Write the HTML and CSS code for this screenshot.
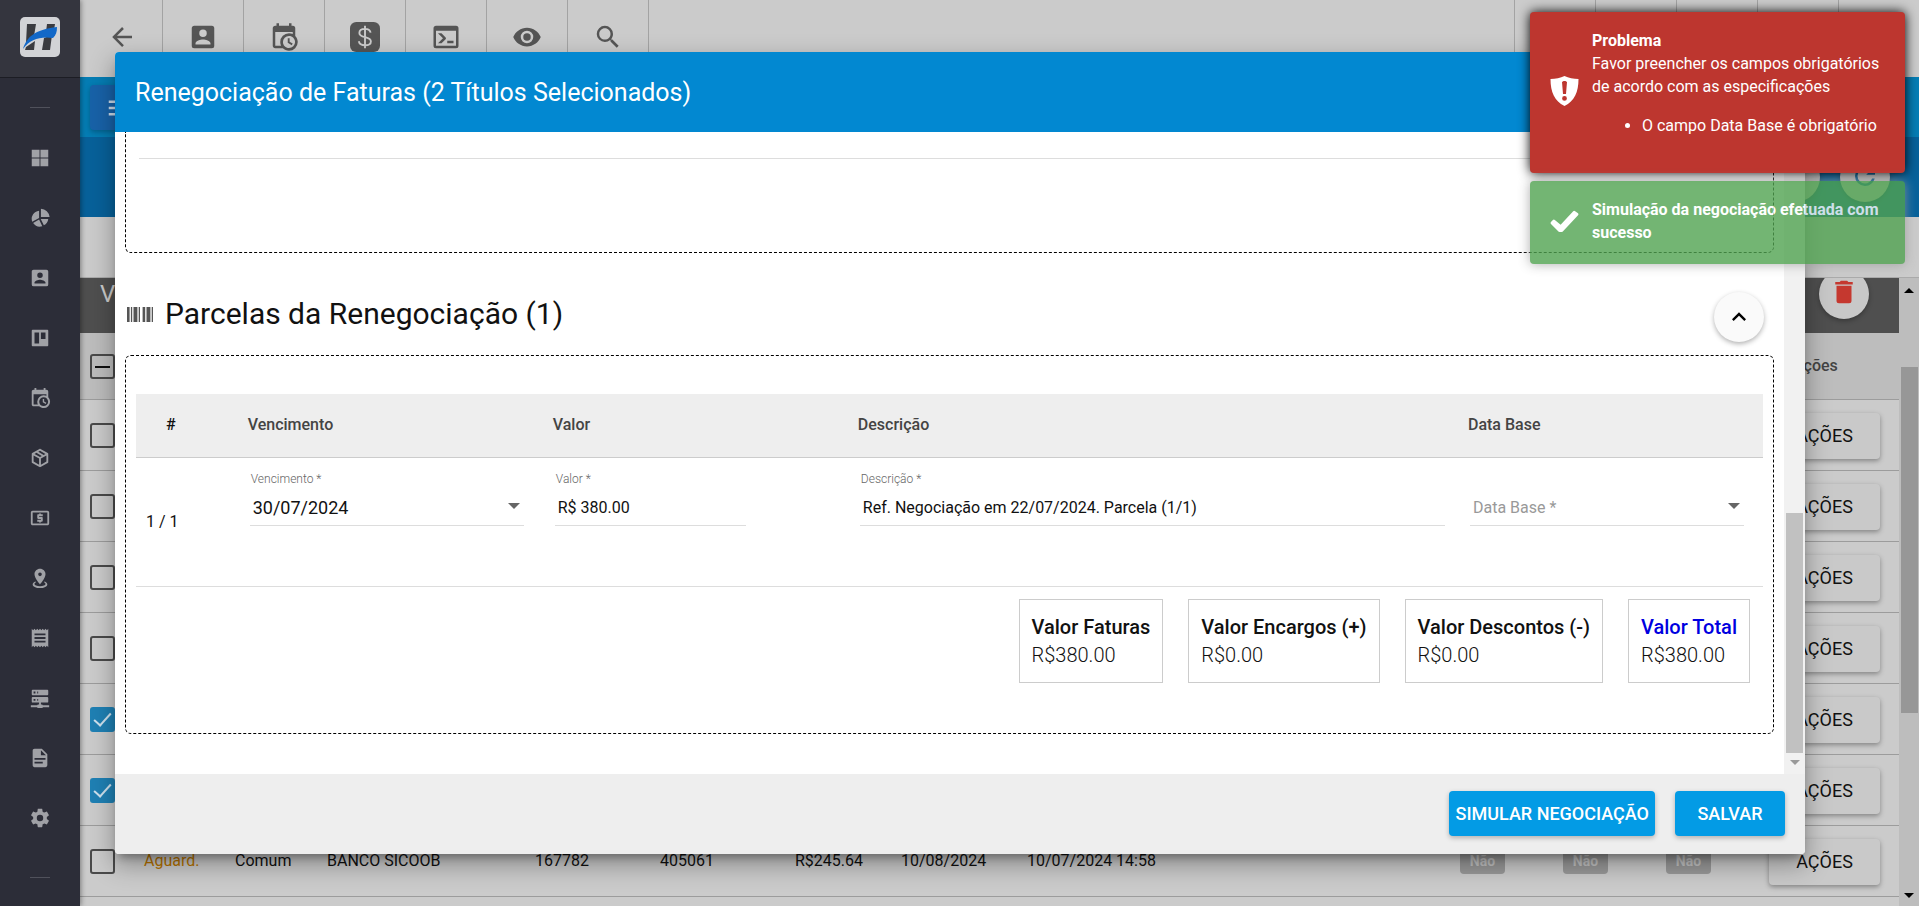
FILE: index.html
```html
<!DOCTYPE html>
<html lang="pt-BR">
<head>
  <meta charset="UTF-8">
  <meta name="viewport" content="width=device-width, initial-scale=1.0">
  <title>Renegociação de Faturas</title>
  <link rel="stylesheet" href="styles.css">
</head>
<body>
  <!-- Menu lateral -->
  <nav class="sidebar">
    <a class="logo" href="#" aria-label="Início">
      <svg width="40" height="40" viewBox="0 0 40 40">
        <rect width="40" height="40" rx="5" fill="#d2d3d6"/>
        <path d="M7 7h9l-2 12-8 7zM27 7h8l-1 6-8 2zM6 30l9-6-1 9H5zM24 21l8-3-2 15h-8z" fill="#3a3b40"/>
        <path d="M3 32C7 20 14 13 37 10c0 5-1 8-4 11C21 19 10 22 3 32z" fill="#1268c8"/>
      </svg>
    </a>
    <hr>
    <ul>
      <li><a href="#" aria-label="Painel"><svg viewBox="0 0 24 24"><path d="M3 3h8.500v8.500H3zM12.500 3H21v8.500h-8.500zM3 12.500h8.500V21H3zM12.500 12.500H21V21h-8.500z"/></svg></a></li>
      <li><a href="#" aria-label="Gráficos"><svg viewBox="0 0 24 24"><path d="M13 2a10 10 0 0 1 9.500 9H13zM11 4v8l-7.500 4A9 9 0 0 1 11 4zM4.500 17.500l6.500-3.800 3.500 7.300A9 9 0 0 1 4.500 17.500zM12.800 13H21a9 9 0 0 1-4.800 7z"/></svg></a></li>
      <li><a href="#" aria-label="Clientes"><svg viewBox="0 0 24 24"><path d="M6,17C6,15 10,13.9 12,13.9C14,13.9 18,15 18,17V18H6M15,9A3,3 0 0,1 12,12A3,3 0 0,1 9,9A3,3 0 0,1 12,6A3,3 0 0,1 15,9M3,5V19A2,2 0 0,0 5,21H19A2,2 0 0,0 21,19V5A2,2 0 0,0 19,3H5C3.89,3 3,3.9 3,5Z"/></svg></a></li>
      <li><a href="#" aria-label="Quadros"><svg viewBox="0 0 24 24"><path fill-rule="evenodd" d="M4 3h16a1 1 0 0 1 1 1v16a1 1 0 0 1-1 1H4a1 1 0 0 1-1-1V4a1 1 0 0 1 1-1zM6 6v12h5V6zM13 6v7h5V6z"/></svg></a></li>
      <li><a href="#" aria-label="Agenda"><svg viewBox="0 0 24 24"><path d="M15,13H16.5V15.82L18.94,17.23L18.19,18.53L15,16.69V13M19,8H5V19H9.67C9.24,18.09 9,17.07 9,16A7,7 0 0,1 16,9C17.07,9 18.09,9.24 19,9.67V8M5,21C3.89,21 3,20.1 3,19V5C3,3.89 3.89,3 5,3H6V1H8V3H16V1H18V3H19A2,2 0 0,1 21,5V11.1C22.24,12.36 23,14.09 23,16A7,7 0 0,1 16,23C14.09,23 12.36,22.24 11.1,21H5M16,11.15A4.85,4.85 0 0,0 11.15,16C11.15,18.68 13.32,20.85 16,20.85A4.85,4.85 0 0,0 20.85,16C20.85,13.32 18.68,11.15 16,11.15Z"/></svg></a></li>
      <li><a href="#" aria-label="Estoque"><svg viewBox="0 0 24 24"><path d="M21,16.5C21,16.88 20.79,17.21 20.47,17.38L12.57,21.82C12.41,21.94 12.21,22 12,22C11.79,22 11.59,21.94 11.43,21.82L3.53,17.38C3.21,17.21 3,16.88 3,16.5V7.5C3,7.12 3.21,6.79 3.53,6.62L11.43,2.18C11.59,2.06 11.79,2 12,2C12.21,2 12.41,2.06 12.57,2.18L20.47,6.62C20.79,6.79 21,7.12 21,7.5V16.5M12,4.15L10.11,5.22L16,8.61L17.96,7.5L12,4.15M6.04,7.5L12,10.85L13.96,9.75L8.08,6.35L6.04,7.5M5,15.91L11,19.29V12.58L5,9.21V15.91M19,15.91V9.21L13,12.58V19.29L19,15.91Z"/></svg></a></li>
      <li><a href="#" aria-label="Financeiro"><svg viewBox="0 0 24 24"><path d="M11 17h2v-1h1c.55 0 1-.45 1-1v-3c0-.55-.45-1-1-1h-3v-1h4V8h-2V7h-2v1h-1c-.55 0-1 .45-1 1v3c0 .55.45 1 1 1h3v1H9v2h2v1zm9-13H4c-1.110 0-1.990.89-1.990 2L2 18c0 1.110.89 2 2 2h16c1.110 0 2-.89 2-2V6c0-1.110-.89-2-2-2zm0 14H4V6h16v12z"/></svg></a></li>
      <li><a href="#" aria-label="Mapa"><svg viewBox="0 0 24 24"><path d="M12,2C15.31,2 18,4.66 18,7.95C18,12.41 12,19 12,19C12,19 6,12.41 6,7.95C6,4.66 8.69,2 12,2M12,6A2,2 0 0,0 10,8A2,2 0 0,0 12,10A2,2 0 0,0 14,8A2,2 0 0,0 12,6M20,19C20,21.21 16.42,23 12,23C7.58,23 4,21.21 4,19C4,17.71 5.22,16.56 7.11,15.83L7.75,16.74C6.67,17.19 6,17.81 6,18.5C6,19.88 8.69,21 12,21C15.31,21 18,19.88 18,18.5C18,17.81 17.33,17.19 16.25,16.74L16.89,15.83C18.78,16.56 20,17.71 20,19Z"/></svg></a></li>
      <li><a href="#" aria-label="Notas"><svg viewBox="0 0 24 24"><path d="M18 17H6v-2h12v2zm0-4H6v-2h12v2zm0-4H6V7h12v2zM3 22l1.500-1.500L6 22l1.500-1.500L9 22l1.500-1.500L12 22l1.500-1.500L15 22l1.500-1.500L18 22l1.500-1.500L21 22V2l-1.500 1.500L18 2l-1.500 1.500L15 2l-1.500 1.500L12 2l-1.500 1.500L9 2 7.500 3.500 6 2 4.500 3.500 3 2v20z"/></svg></a></li>
      <li><a href="#" aria-label="Rede"><svg viewBox="0 0 24 24"><path d="M13,19H14A1,1 0 0,1 15,20H22V22H15A1,1 0 0,1 14,23H10A1,1 0 0,1 9,22H2V20H9A1,1 0 0,1 10,19H11V17H4A1,1 0 0,1 3,16V12A1,1 0 0,1 4,11H20A1,1 0 0,1 21,12V16A1,1 0 0,1 20,17H13V19M4,3H20A1,1 0 0,1 21,4V8A1,1 0 0,1 20,9H4A1,1 0 0,1 3,8V4A1,1 0 0,1 4,3M9,7H10V5H9V7M9,15H10V13H9V15M5,5V7H7V5H5M5,13V15H7V13H5Z"/></svg></a></li>
      <li><a href="#" aria-label="Relatórios"><svg viewBox="0 0 24 24"><path d="M13,9H18.5L13,3.5V9M6,2H14L20,8V20A2,2 0 0,1 18,22H6C4.89,22 4,21.1 4,20V4C4,2.89 4.89,2 6,2M15,18V16H6V18H15M18,14V12H6V14H18Z"/></svg></a></li>
      <li><a href="#" aria-label="Configurações"><svg viewBox="0 0 24 24"><path d="M12,15.5A3.5,3.5 0 0,1 8.5,12A3.5,3.5 0 0,1 12,8.5A3.5,3.5 0 0,1 15.5,12A3.5,3.5 0 0,1 12,15.5M19.43,12.97C19.47,12.65 19.5,12.33 19.5,12C19.5,11.67 19.47,11.34 19.43,11L21.54,9.37C21.73,9.22 21.78,8.95 21.66,8.73L19.66,5.27C19.54,5.05 19.27,4.96 19.05,5.05L16.56,6.05C16.04,5.66 15.5,5.32 14.87,5.07L14.5,2.42C14.46,2.18 14.25,2 14,2H10C9.75,2 9.54,2.18 9.5,2.42L9.13,5.07C8.5,5.32 7.96,5.66 7.44,6.05L4.95,5.05C4.73,4.96 4.46,5.05 4.34,5.27L2.34,8.73C2.21,8.95 2.27,9.22 2.46,9.37L4.57,11C4.53,11.34 4.5,11.67 4.5,12C4.5,12.33 4.53,12.65 4.57,12.97L2.46,14.63C2.27,14.78 2.21,15.05 2.34,15.27L4.34,18.73C4.46,18.95 4.73,19.03 4.95,18.95L7.44,17.94C7.96,18.34 8.5,18.68 9.13,18.93L9.5,21.58C9.54,21.82 9.75,22 10,22H14C14.25,22 14.46,21.82 14.5,21.58L14.87,18.93C15.5,18.67 16.04,18.34 16.56,17.94L19.05,18.95C19.27,19.03 19.54,18.95 19.66,18.73L21.66,15.27C21.78,15.05 21.73,14.78 21.54,14.63L19.43,12.97Z"/></svg></a></li>
    </ul>
    <hr>
  </nav>

  <main class="page">
    <!-- Barra superior -->
    <header class="toolbar">
      <button aria-label="Voltar"><svg viewBox="0 0 24 24"><path d="M20,11V13H8L13.5,18.5L12.08,19.92L4.16,12L12.08,4.08L13.5,5.5L8,11H20Z"/></svg></button>
      <button aria-label="Clientes"><svg viewBox="0 0 24 24"><path d="M6,17C6,15 10,13.9 12,13.9C14,13.9 18,15 18,17V18H6M15,9A3,3 0 0,1 12,12A3,3 0 0,1 9,9A3,3 0 0,1 12,6A3,3 0 0,1 15,9M3,5V19A2,2 0 0,0 5,21H19A2,2 0 0,0 21,19V5A2,2 0 0,0 19,3H5C3.89,3 3,3.9 3,5Z"/></svg></button>
      <button aria-label="Agenda"><svg viewBox="0 0 24 24"><path d="M15,13H16.5V15.82L18.94,17.23L18.19,18.53L15,16.69V13M19,8H5V19H9.67C9.24,18.09 9,17.07 9,16A7,7 0 0,1 16,9C17.07,9 18.09,9.24 19,9.67V8M5,21C3.89,21 3,20.1 3,19V5C3,3.89 3.89,3 5,3H6V1H8V3H16V1H18V3H19A2,2 0 0,1 21,5V11.1C22.24,12.36 23,14.09 23,16A7,7 0 0,1 16,23C14.09,23 12.36,22.24 11.1,21H5M16,11.15A4.85,4.85 0 0,0 11.15,16C11.15,18.68 13.32,20.85 16,20.85A4.85,4.85 0 0,0 20.85,16C20.85,13.32 18.68,11.15 16,11.15Z"/></svg></button>
      <button aria-label="Financeiro"><svg viewBox="0 0 24 24"><rect width="24" height="24" rx="5"/><path class="cifra" d="M16.500 8.500C16 6.500 14.500 5.500 12 5.500S7.500 6.700 7.500 8.700c0 4.600 9.200 2.200 9.200 6.800 0 2-1.900 3.100-4.700 3.100s-4.500-1.100-5-3.200M12 3v18"/></svg></button>
      <button aria-label="Terminal"><svg viewBox="0 0 24 24"><path d="M20,19V7H4V19H20M20,3A2,2 0 0,1 22,5V19A2,2 0 0,1 20,21H4A2,2 0 0,1 2,19V5C2,3.89 2.9,3 4,3H20M13,17V15H18V17H13M9.58,13L5.57,9H8.4L11.7,12.3C12.09,12.69 12.09,13.33 11.7,13.72L8.42,17H5.59L9.58,13Z"/></svg></button>
      <button aria-label="Visualizar"><svg viewBox="0 0 24 24"><path d="M12,9A3,3 0 0,0 9,12A3,3 0 0,0 12,15A3,3 0 0,0 15,12A3,3 0 0,0 12,9M12,17A5,5 0 0,1 7,12A5,5 0 0,1 12,7A5,5 0 0,1 17,12A5,5 0 0,1 12,17M12,4.5C7,4.5 2.73,7.61 1,12C2.73,16.39 7,19.5 12,19.5C17,19.5 21.27,16.39 23,12C21.27,7.61 17,4.5 12,4.5Z"/></svg></button>
      <button aria-label="Pesquisar"><svg viewBox="0 0 24 24"><path d="M9.5,3A6.5,6.5 0 0,1 16,9.5C16,11.11 15.41,12.59 14.44,13.73L14.71,14H15.5L20.5,19L19,20.5L14,15.5V14.71L13.73,14.44C12.59,15.41 11.11,16 9.5,16A6.5,6.5 0 0,1 3,9.5A6.5,6.5 0 0,1 9.5,3M9.5,5C7,5 5,7 5,9.5C5,12 7,14 9.5,14C12,14 14,12 14,9.5C14,7 12,5 9.5,5Z"/></svg></button>
      <div class="toolbar-fim"><span></span><span></span><span></span><span></span><span></span></div>
    </header>

    <div class="barra-menu">
      <button class="btn-menu" aria-label="Menu"><svg viewBox="0 0 24 24"><path d="M3,6H21V8H3V6M3,11H21V13H3V11M3,16H21V18H3V16Z"/></svg></button>
    </div>
    <div class="barra-acoes">
      <button class="redondo" aria-label="Filtrar"></button>
      <button class="redondo" aria-label="Atualizar"><svg viewBox="0 0 24 24"><path d="M17.65,6.35C16.2,4.9 14.21,4 12,4A8,8 0 0,0 4,12A8,8 0 0,0 12,20C15.73,20 18.84,17.45 19.73,14H17.65C16.83,16.33 14.61,18 12,18A6,6 0 0,1 6,12A6,6 0 0,1 12,6C13.66,6 15.14,6.69 16.22,7.78L13,11H20V4L17.65,6.35Z"/></svg></button>
    </div>

    <!-- Lista de faturas -->
    <div class="lista">
      <div class="lista-conteudo">
        <div class="lista-titulo">
          <span>V</span>
          <button class="redondo excluir" aria-label="Excluir"><svg viewBox="0 0 24 24"><path d="M19,4H15.5L14.5,3H9.5L8.5,4H5V6H19M6,19A2,2 0 0,0 8,21H16A2,2 0 0,0 18,19V7H6V19Z"/></svg></button>
        </div>
        <table class="faturas">
          <colgroup>
            <col class="c-check"><col class="c-status"><col class="c-tipo"><col class="c-banco"><col class="c-numero"><col class="c-codigo"><col class="c-valor"><col class="c-data"><col><col class="c-tag"><col class="c-tag"><col class="c-tag"><col class="c-acoes">
          </colgroup>
          <thead>
            <tr><th><input class="parcial" type="checkbox" aria-label="Selecionar todos"></th><th colspan="11"></th><th class="th-acoes">Ações</th></tr>
          </thead>
          <tbody>
            <tr><td><input type="checkbox" aria-label="Selecionar"></td><td colspan="11"></td><td><button class="btn-acoes">AÇÕES</button></td></tr>
            <tr><td><input type="checkbox" aria-label="Selecionar"></td><td colspan="11"></td><td><button class="btn-acoes">AÇÕES</button></td></tr>
            <tr><td><input type="checkbox" aria-label="Selecionar"></td><td colspan="11"></td><td><button class="btn-acoes">AÇÕES</button></td></tr>
            <tr><td><input type="checkbox" aria-label="Selecionar"></td><td colspan="11"></td><td><button class="btn-acoes">AÇÕES</button></td></tr>
            <tr><td><input type="checkbox" aria-label="Selecionar" checked></td><td colspan="11"></td><td><button class="btn-acoes">AÇÕES</button></td></tr>
            <tr><td><input type="checkbox" aria-label="Selecionar" checked></td><td colspan="11"></td><td><button class="btn-acoes">AÇÕES</button></td></tr>
            <tr>
              <td><input type="checkbox" aria-label="Selecionar"></td>
              <td class="aguardando">Aguard.</td>
              <td>Comum</td>
              <td>BANCO SICOOB</td>
              <td>167782</td>
              <td>405061</td>
              <td>R$245.64</td>
              <td>10/08/2024</td>
              <td>10/07/2024 14:58</td>
              <td><span class="tag">Não</span></td>
              <td><span class="tag">Não</span></td>
              <td><span class="tag">Não</span></td>
              <td><button class="btn-acoes">AÇÕES</button></td>
            </tr>
          </tbody>
        </table>
      </div>
      <div class="rolagem rolagem-pagina">
        <svg viewBox="0 0 10 5"><path d="M0 5l5-5 5 5z"/></svg>
        <div class="rolagem-trilho"><div class="rolagem-barra"></div></div>
        <svg viewBox="0 0 10 5"><path d="M0 0h10L5 5z"/></svg>
      </div>
    </div>
  </main>

  <!-- Modal de renegociação -->
  <div class="modal" role="dialog" aria-labelledby="modal-titulo">
    <div class="modal-topo">
      <h2 id="modal-titulo">Renegociação de Faturas (2 Títulos Selecionados)</h2>
    </div>
    <div class="modal-corpo">
      <div class="modal-conteudo">
        <div class="quadro quadro-anterior"><hr></div>

        <div class="secao-titulo">
          <svg viewBox="2 6 20 12" preserveAspectRatio="none"><path d="M2,6H4V18H2V6M5,6H6V18H5V6M7,6H10V18H7V6M11,6H12V18H11V6M14,6H16V18H14V6M17,6H20V18H17V6M21,6H22V18H21V6Z"/></svg>
          <h3>Parcelas da Renegociação (1)</h3>
          <button class="redondo recolher" aria-label="Recolher"><svg viewBox="0 0 24 24"><path d="M7.41,15.41L12,10.83L16.59,15.41L18,14L12,8L6,14L7.41,15.41Z"/></svg></button>
        </div>

        <div class="quadro quadro-parcelas">
          <table class="parcelas">
            <colgroup><col class="p-num"><col class="p-campo"><col class="p-campo"><col class="p-desc"><col class="p-campo"></colgroup>
            <thead>
              <tr><th class="num">#</th><th>Vencimento</th><th>Valor</th><th>Descrição</th><th>Data Base</th></tr>
            </thead>
            <tbody>
              <tr>
                <td class="num">1 / 1</td>
                <td>
                  <div class="campo">
                    <label for="vencimento">Vencimento *</label>
                    <div class="entrada">
                      <select id="vencimento"><option>30/07/2024</option></select>
                      <svg viewBox="0 0 12 6"><path d="M0 0h12L6 6z"/></svg>
                    </div>
                  </div>
                </td>
                <td>
                  <div class="campo campo-valor">
                    <label for="valor">Valor *</label>
                    <div class="entrada"><input id="valor" type="text" value="R$ 380.00"></div>
                  </div>
                </td>
                <td>
                  <div class="campo campo-desc">
                    <label for="descricao">Descrição *</label>
                    <div class="entrada"><input id="descricao" type="text" value="Ref. Negociação em 22/07/2024. Parcela (1/1)"></div>
                  </div>
                </td>
                <td>
                  <div class="campo campo-vazio">
                    <div class="entrada">
                      <select aria-label="Data Base"><option>Data Base *</option></select>
                      <svg viewBox="0 0 12 6"><path d="M0 0h12L6 6z"/></svg>
                    </div>
                  </div>
                </td>
              </tr>
            </tbody>
          </table>
          <div class="totais">
            <div class="total"><strong>Valor Faturas</strong><span>R$380.00</span></div>
            <div class="total"><strong>Valor Encargos (+)</strong><span>R$0.00</span></div>
            <div class="total"><strong>Valor Descontos (-)</strong><span>R$0.00</span></div>
            <div class="total total-geral"><strong>Valor Total</strong><span>R$380.00</span></div>
          </div>
        </div>
      </div>
      <div class="rolagem rolagem-modal">
        <div class="rolagem-trilho"><div class="rolagem-barra"></div></div>
        <svg viewBox="0 0 10 5"><path d="M0 0h10L5 5z"/></svg>
      </div>
    </div>
    <div class="modal-rodape">
      <button class="btn-azul">SIMULAR NEGOCIAÇÃO</button>
      <button class="btn-azul">SALVAR</button>
    </div>
  </div>

  <!-- Notificações -->
  <div class="avisos">
    <div class="aviso erro" role="alert">
      <svg viewBox="0 0 28 30"><path fill-rule="evenodd" d="M14 0c4 2 9 3 14 3 0 13-4 22-14 27C4 25 0 16 0 3c5 0 10-1 14-3zM11.500 6l1 12h3l1-12c-1-1.500-4-1.500-5 0zM14 20a2.400 2.400 0 1 0 0 4.800 2.400 2.400 0 0 0 0-4.800z"/></svg>
      <div>
        <strong>Problema</strong>
        <p>Favor preencher os campos obrigatórios de acordo com as especificações</p>
        <ul><li>O campo Data Base é obrigatório</li></ul>
      </div>
    </div>
    <div class="aviso sucesso" role="status">
      <svg viewBox="0 0 30 24"><path d="M1 15q-1-1 0-2l2-2q1-1 2 0l6 5L24 2q1-1 2 0l3 2q1 1 0 2L13 23q-2 1-4 0z"/></svg>
      <div><strong>Simulação da negociação efetuada com sucesso</strong></div>
    </div>
  </div>
</body>
</html>
```
FILE: styles.css
```css
* {
  box-sizing: border-box;
}
body {
  margin: 0;
  display: flex;
  height: 100vh;
  overflow: hidden;
  background-color: #cbcbcb;
  color: #111;
  font-family: Roboto, "Liberation Sans", sans-serif;
  font-size: 16px;
}
button {
  font-family: inherit;
  border: none;
  padding: 0;
  cursor: pointer;
}
svg {
  flex-shrink: 0;
}

/* Menu lateral */
.sidebar {
  width: 80px;
  flex-shrink: 0;
  background-color: #2c2d38;
  box-shadow: 1px 0 5px rgba(0, 0, 0, 0.4);
  z-index: 1;
}
.sidebar .logo {
  display: flex;
  align-items: center;
  justify-content: center;
  height: 78px;
  padding-bottom: 3px;
  background-color: #34353e;
  border-bottom: 1px solid #1c1d24;
}
.sidebar hr {
  width: 20px;
  height: 1px;
  margin: 29px auto 20px;
  border: none;
  background-color: #50515b;
}
.sidebar ul {
  list-style: none;
  margin: 0;
  padding: 0;
}
.sidebar li a {
  display: flex;
  align-items: center;
  justify-content: center;
  height: 60px;
}
.sidebar li svg {
  width: 22px;
  height: 22px;
  fill: #a0a1a6;
}

/* Barra superior */
.page {
  flex: 1;
  min-width: 0;
  display: flex;
  flex-direction: column;
}
.toolbar {
  display: flex;
  height: 77px;
  flex-shrink: 0;
  padding-left: 2px;
}
.toolbar button,
.toolbar-fim span {
  width: 81px;
  background-color: transparent;
}
.toolbar button {
  border-right: 1px solid #a3a3a3;
}
.toolbar button svg {
  width: 30px;
  height: 30px;
  fill: #555;
}
.toolbar .cifra {
  fill: none;
  stroke: #cbcbcb;
  stroke-width: 1.5;
}
.toolbar-fim {
  display: flex;
  margin-left: auto;
}
.toolbar-fim span {
  border-left: 1px solid #a3a3a3;
}
.barra-menu {
  height: 60px;
  flex-shrink: 0;
  padding: 8px 10px;
  background-color: #057db4;
}
.btn-menu {
  width: 60px;
  height: 45px;
  padding-top: 4px;
  border-radius: 4px;
  background-color: #1862a8;
  box-shadow: 0 2px 5px rgba(0, 0, 0, 0.25);
}
.btn-menu svg {
  width: 30px;
  height: 30px;
  fill: #cbdcec;
}
.barra-acoes {
  display: flex;
  justify-content: flex-end;
  gap: 20px;
  height: 80px;
  flex-shrink: 0;
  padding: 15px 29px;
  background-color: #07619a;
}
.redondo {
  width: 50px;
  height: 50px;
  flex-shrink: 0;
  border-radius: 50%;
  background-color: #c8c8c8;
  box-shadow: 0 2px 5px rgba(0, 0, 0, 0.3);
}
.redondo svg {
  width: 30px;
  height: 30px;
  fill: #07619a;
}

/* Lista de faturas */
.lista {
  flex: 1;
  min-height: 0;
  display: flex;
  margin-top: 60px;
  border-top: 1px solid #aaa;
}
.lista-conteudo {
  flex: 1;
  overflow: hidden;
}
.lista-titulo {
  display: flex;
  align-items: center;
  justify-content: space-between;
  height: 55px;
  padding: 0 30px 24px 20px;
  background-color: #4f4f4f;
  color: #cbcbcb;
  font-size: 24px;
}
.excluir svg {
  fill: #c5382f;
}
.faturas {
  width: 100%;
  table-layout: fixed;
  border-collapse: collapse;
}
.faturas th,
.faturas td {
  height: 71px;
  padding: 0;
  border-bottom: 1px solid #9c9c9c;
  text-align: left;
}
.faturas th {
  height: 66px;
  background-color: #bdbdbd;
  color: #444;
  font-weight: 500;
}
.faturas th:first-child,
.faturas td:first-child {
  padding: 2px 0 0 10px;
}
.faturas td:last-child {
  padding-top: 2px;
}
.faturas .th-acoes {
  padding-left: 24px;
}
.c-check { width: 64px; }
.c-status { width: 91px; }
.c-tipo { width: 92px; }
.c-banco { width: 208px; }
.c-numero { width: 125px; }
.c-codigo { width: 135px; }
.c-valor { width: 106px; }
.c-data { width: 126px; }
.c-tag { width: 103px; }
.c-acoes { width: 130px; }
.faturas input {
  appearance: none;
  display: block;
  width: 25px;
  height: 25px;
  margin: 0;
  border: 2px solid #4a4a4a;
  border-radius: 3px;
}
.faturas input.parcial {
  background: linear-gradient(#111, #111) center / 15px 2px no-repeat;
}
.faturas input:checked {
  border-color: #1f80b4;
  background-color: #1f80b4;
}
.faturas input:checked::after {
  content: "";
  display: block;
  width: 7px;
  height: 15px;
  margin: 0 auto;
  border: solid #cfe2ee;
  border-width: 0 2px 2px 0;
  transform: rotate(42deg);
}
.aguardando {
  color: #b57200;
}
.tag {
  display: inline-block;
  width: 45px;
  padding: 4px 0;
  border-radius: 4px;
  background-color: #999;
  color: #c4c4c4;
  font-size: 14px;
  font-weight: 700;
  line-height: 18px;
  text-align: center;
}
.btn-acoes {
  display: block;
  width: 111px;
  height: 46px;
  border-radius: 4px;
  background-color: #c9c9c9;
  box-shadow: 0 2px 5px rgba(0, 0, 0, 0.35);
  color: #111;
  font-size: 18px;
}

/* Barras de rolagem */
.rolagem {
  display: flex;
  flex-direction: column;
  align-items: center;
  flex-shrink: 0;
}
.rolagem svg {
  width: 10px;
  height: 5px;
}
.rolagem-trilho {
  flex: 1;
  width: 17px;
  display: flex;
  flex-direction: column;
}
.rolagem-pagina {
  width: 20px;
  padding: 10px 0 8px;
  background-color: #bdbdbd;
}
.rolagem-pagina .rolagem-trilho {
  padding: 74px 0 180px;
}
.rolagem-pagina .rolagem-barra {
  flex: 1;
  background-color: #979797;
}
.rolagem-modal {
  width: 21px;
  padding-bottom: 9px;
  background-color: #f1f1f1;
}
.rolagem-modal .rolagem-trilho {
  justify-content: flex-end;
  padding-bottom: 7px;
}
.rolagem-modal .rolagem-barra {
  height: 240px;
  background-color: #c1c1c1;
}
.rolagem-modal svg {
  fill: #999;
}

/* Modal */
.modal {
  position: absolute;
  inset: 52px 114px 52px 115px;
  display: flex;
  flex-direction: column;
  border-radius: 4px;
  overflow: hidden;
  background-color: #fff;
  box-shadow: 0 7px 8px -4px rgba(0, 0, 0, 0.3), 0 10px 24px 2px rgba(0, 0, 0, 0.3);
  z-index: 2;
}
.modal-topo {
  display: flex;
  align-items: center;
  height: 80px;
  flex-shrink: 0;
  padding: 0 20px;
  background-color: #0288d1;
  color: #fff;
}
.modal-topo h2 {
  margin: 0;
  font-size: 25px;
  font-weight: 400;
}
.modal-corpo {
  flex: 1;
  min-height: 0;
  display: flex;
}
.modal-conteudo {
  flex: 1;
  min-width: 0;
  padding: 0 10px;
  overflow: hidden;
}
.quadro {
  border: 1px dashed #000;
  border-radius: 6px;
}
.quadro-anterior {
  height: 121px;
  padding: 26px 13px 0;
  border-top: none;
  border-top-left-radius: 0;
  border-top-right-radius: 0;
}
.quadro-anterior hr {
  height: 1px;
  margin: 0;
  border: none;
  background-color: #ddd;
}
.secao-titulo {
  display: flex;
  align-items: center;
  padding: 39px 10px 13px 2px;
}
.secao-titulo > svg {
  width: 26px;
  height: 15px;
  margin: 0 12px 5px 0;
  fill: #555;
}
.secao-titulo h3 {
  margin: 0;
  padding-bottom: 8px;
  font-size: 30px;
  font-weight: 400;
}
.recolher {
  margin-left: auto;
  background-color: #fafafa;
}
.recolher svg {
  width: 28px;
  height: 28px;
  fill: #000;
  vertical-align: middle;
}
.quadro-parcelas {
  padding: 38px 10px 50px;
}
.parcelas {
  width: 100%;
  table-layout: fixed;
  border-collapse: collapse;
}
.p-num { width: 6.25%; }
.p-campo { width: 18.75%; }
.p-desc { width: 37.5%; }
.parcelas th {
  height: 63px;
  padding: 0 10px 2px;
  border-bottom: 1px solid #ccc;
  background-color: #eee;
  color: #444;
  font-weight: 500;
  text-align: left;
}
.parcelas td {
  height: 129px;
  padding: 14px 19px 0 12px;
  border-bottom: 1px solid #ddd;
  vertical-align: top;
}
.parcelas th.num {
  padding-left: 30px;
  color: #111;
}
.parcelas td.num {
  padding: 0 10px;
  vertical-align: middle;
}
.campo label {
  display: block;
  padding-left: 1px;
  color: #666;
  font-size: 12px;
  font-weight: 300;
  line-height: 14px;
}
.entrada {
  display: flex;
  align-items: center;
  height: 40px;
  padding: 5px 4px 0 3px;
  border-bottom: 1px solid #ddd;
}
.entrada input,
.entrada select {
  appearance: none;
  flex: 1;
  min-width: 0;
  padding: 0;
  border: none;
  outline: none;
  background-color: transparent;
  color: #111;
  font-family: inherit;
  font-size: 16px;
}
.entrada select {
  font-size: 18px;
}
.entrada svg {
  width: 12px;
  height: 6px;
  margin-bottom: 4px;
  fill: #666;
}
.campo-valor {
  width: 191px;
}
.campo-desc {
  margin-right: -6px;
}
.campo-vazio {
  padding-top: 14px;
}
.campo-vazio select {
  color: #999;
  font-size: 16px;
}
.totais {
  display: flex;
  justify-content: flex-end;
  gap: 25px;
  margin: 12px 13px 0 0;
}
.total {
  display: flex;
  flex-direction: column;
  padding: 13px 12px;
  border: 1px solid #ccc;
  font-size: 20px;
  font-weight: 300;
  line-height: 28px;
}
.total strong {
  font-weight: 500;
}
.total-geral strong {
  color: #0000e0;
}
.modal-rodape {
  display: flex;
  align-items: center;
  justify-content: flex-end;
  gap: 20px;
  height: 80px;
  flex-shrink: 0;
  padding: 0 20px 2px;
  background-color: #eee;
}
.btn-azul {
  min-width: 110px;
  height: 45px;
  padding: 0 6px;
  border-radius: 4px;
  background-color: #039be5;
  box-shadow: 0 2px 5px rgba(0, 0, 0, 0.26);
  color: #fff;
  font-size: 18px;
  font-weight: 500;
}

/* Notificações */
.avisos {
  position: absolute;
  top: 12px;
  right: 14px;
  width: 375px;
  display: flex;
  flex-direction: column;
  gap: 8px;
  z-index: 3;
}
.aviso {
  display: flex;
  align-items: center;
  gap: 13px;
  padding: 17px 20px 20px;
  border-radius: 4px;
  color: #fff;
  line-height: 23px;
}
.aviso svg {
  width: 29px;
  height: 30px;
  fill: #fff;
}
.aviso p {
  margin: 0;
}
.aviso ul {
  margin: 16px 0;
  padding-left: 50px;
}
.erro {
  background-color: #bd362f;
  box-shadow: 0 0 12px #000;
}
.sucesso {
  background-color: #51a351;
  box-shadow: 0 0 12px #999;
  opacity: 0.8;
}
```
